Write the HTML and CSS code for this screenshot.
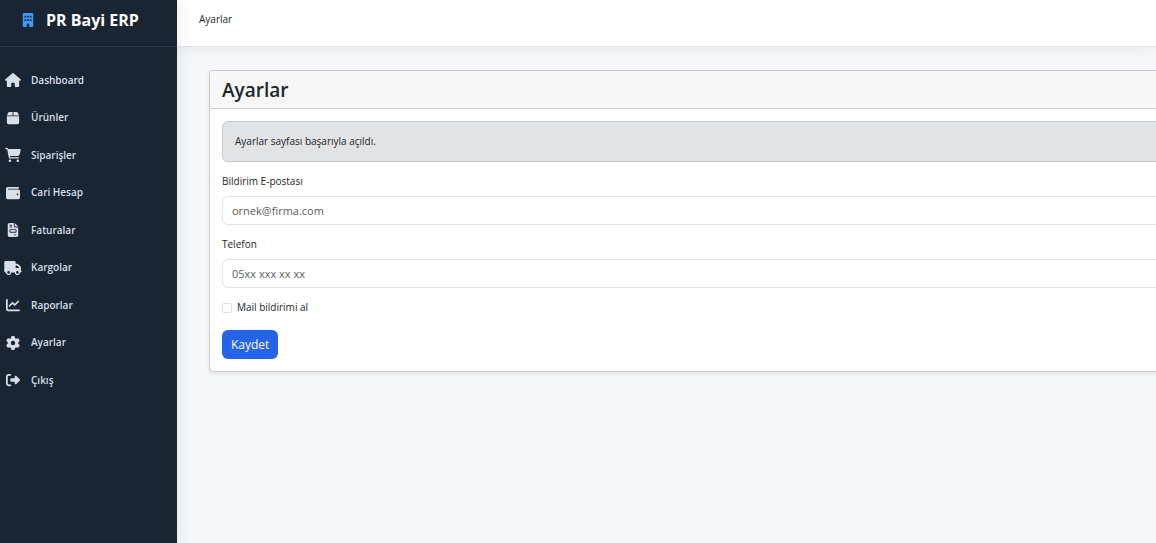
FILE: index.html
```html
<!doctype html>
<html lang="tr">
<head>
	<meta charset="UTF-8">
	<meta name="viewport" content="width=device-width, initial-scale=1">
	<title>Ayarlar</title>

	<link rel="stylesheet" href="styles.css">
</head>
<body>

	<aside class="sidebar">
		<div class="brand">
			<svg class="brand-icon" viewBox="0 0 384 512"><path fill-rule="evenodd" d="M48 0C21 0 0 21 0 48V464c0 27 21 48 48 48h96v-80a48 48 0 0 1 96 0v80h96c27 0 48-21 48-48V48c0-27-21-48-48-48zM64 96h64v64H64zM160 96h64v64h-64zM256 96h64v64h-64zM64 224h64v64H64zM160 224h64v64h-64zM256 224h64v64h-64z"/></svg>
			<span>PR Bayi ERP</span>
		</div>

		<nav>
			<ul class="menu">
				<li><a href="#">
					<svg viewBox="0 0 576 512"><path d="M575.8 255.5c0 18-15 32.1-32 32.1h-32l.7 160.2c0 2.7-.2 5.4-.5 8.1V472c0 22.1-17.9 40-40 40H392c-22.1 0-40-17.9-40-40V384c0-17.7-14.3-32-32-32H256c-17.7 0-32 14.3-32 32v88c0 22.1-17.9 40-40 40H104c-22.1 0-40-17.9-40-40V287.6H32c-18 0-32-14-32-32.1c0-9 3-17 10-24L266.4 8c7-7 15-8 22-8s15 2 21 7L564.8 231.5c8 7 12 15 11 24z"/></svg>
					<span>Dashboard</span>
				</a></li>
				<li><a href="#">
					<svg viewBox="0 0 448 512"><path d="M50.7 58.5L0 160H208V32H93.7C75.5 32 58.9 42.3 50.7 58.5zM240 160H448L397.3 58.5C389.1 42.3 372.5 32 354.3 32H240V160zm208 32H0V416c0 35.3 28.7 64 64 64H384c35.3 0 64-28.7 64-64V192z"/></svg>
					<span>Ürünler</span>
				</a></li>
				<li><a href="#">
					<svg viewBox="0 0 576 512"><path d="M0 24C0 10.7 10.7 0 24 0H69.5c22 0 41.5 12.8 50.6 32h411c26.3 0 45.5 25 38.6 50.4l-41 152.3c-8.5 31.4-37 53.3-69.5 53.3H170.7l5.4 28.5c2.2 11.3 12.1 19.5 23.6 19.5H488c13.3 0 24 10.7 24 24s-10.7 24-24 24H199.7c-34.6 0-64.3-24.6-70.7-58.5L77.4 54.5c-.7-3.8-4-6.5-7.9-6.5H24C10.7 48 0 37.3 0 24zM128 464a48 48 0 1 1 96 0 48 48 0 1 1 -96 0zm336-48a48 48 0 1 1 0 96 48 48 0 1 1 0-96z"/></svg>
					<span>Siparişler</span>
				</a></li>
				<li><a href="#">
					<svg viewBox="0 0 512 512"><path d="M64 32C28.7 32 0 60.7 0 96V416c0 35.3 28.7 64 64 64H448c35.3 0 64-28.7 64-64V192c0-35.3-28.7-64-64-64H80c-8.8 0-16-7.2-16-16s7.2-16 16-16H448c17.7 0 32-14.3 32-32s-14.3-32-32-32H64zM416 272a32 32 0 1 1 0 64 32 32 0 1 1 0-64z"/></svg>
					<span>Cari Hesap</span>
				</a></li>
				<li><a href="#">
					<svg viewBox="0 0 384 512"><path fill-rule="evenodd" d="M64 0C28.7 0 0 28.7 0 64V448c0 35.3 28.7 64 64 64H320c35.3 0 64-28.7 64-64V160H256c-17.7 0-32-14.3-32-32V0H64zM256 0V128H384L256 0zM80 64h64c8.8 0 16 7.2 16 16s-7.2 16-16 16H80c-8.8 0-16-7.2-16-16s7.2-16 16-16zm0 64h64c8.8 0 16 7.2 16 16s-7.2 16-16 16H80c-8.8 0-16-7.2-16-16s7.2-16 16-16zm16 96H288c17.7 0 32 14.3 32 32v64c0 17.7-14.3 32-32 32H96c-17.7 0-32-14.3-32-32V256c0-17.7 14.3-32 32-32zm0 32v64H288V256H96zM240 416h64c8.8 0 16 7.2 16 16s-7.2 16-16 16H240c-8.8 0-16-7.2-16-16s7.2-16 16-16z"/></svg>
					<span>Faturalar</span>
				</a></li>
				<li><a href="#">
					<svg viewBox="0 0 640 512"><path fill-rule="evenodd" d="M48 0C21.5 0 0 21.5 0 48V368c0 26.5 21.5 48 48 48H64c0 53 43 96 96 96s96-43 96-96H384c0 53 43 96 96 96s96-43 96-96h32c17.7 0 32-14.3 32-32s-14.3-32-32-32V237.3c0-17-6.7-33.3-18.7-45.3L512 114.7c-12-12-28.3-18.7-45.3-18.7H416V48c0-26.5-21.5-48-48-48H48zM416 160h50.7L544 237.3V256H416V160zM112 416a48 48 0 1 1 96 0 48 48 0 1 1 -96 0zm368-48a48 48 0 1 1 0 96 48 48 0 1 1 0-96z"/></svg>
					<span>Kargolar</span>
				</a></li>
				<li><a href="#">
					<svg viewBox="0 0 512 512"><path d="M64 64c0-17.7-14.3-32-32-32S0 46.3 0 64V400c0 44.2 35.8 80 80 80H480c17.7 0 32-14.3 32-32s-14.3-32-32-32H80c-8.8 0-16-7.2-16-16V64zm406.6 86.6c12.5-12.5 12.5-32.8 0-45.3s-32.8-12.5-45.3 0L320 210.7l-57.4-57.4c-12.5-12.5-32.8-12.5-45.3 0l-112 112c-12.5 12.5-12.5 32.8 0 45.3s32.8 12.5 45.3 0L240 221.3l57.4 57.4c12.5 12.5 32.8 12.5 45.3 0l128-128z"/></svg>
					<span>Raporlar</span>
				</a></li>
				<li><a href="#">
					<svg viewBox="0 0 512 512"><path d="M495.9 166.6c3.2 8.7 .5 18.4-6.4 24.6l-43.3 39.4c1.1 8.3 1.7 16.8 1.7 25.4s-.6 17.1-1.7 25.4l43.3 39.4c6.9 6.2 9.6 15.9 6.4 24.6c-4.4 11.9-9.7 23.3-15.8 34.3l-4.7 8.1c-6.6 11-14 21.4-22.1 31.2c-5.9 7.2-15.7 9.6-24.5 6.8l-55.7-17.7c-13.4 10.3-28.2 18.9-44 25.4l-12.5 57.1c-2 9.1-9 16.3-18.2 17.8c-13.8 2.3-28 3.5-42.5 3.5s-28.7-1.2-42.5-3.5c-9.2-1.5-16.2-8.7-18.2-17.8l-12.5-57.1c-15.8-6.5-30.6-15.1-44-25.4L83.1 425.9c-8.8 2.8-18.6 .3-24.5-6.8c-8.1-9.8-15.5-20.2-22.1-31.2l-4.7-8.1c-6.1-11-11.4-22.4-15.8-34.3c-3.2-8.7-.5-18.4 6.4-24.6l43.3-39.4C64.6 273.1 64 264.6 64 256s.6-17.1 1.7-25.4L22.4 191.2c-6.9-6.2-9.6-15.9-6.4-24.6c4.4-11.9 9.7-23.3 15.8-34.3l4.7-8.1c6.6-11 14-21.4 22.1-31.2c5.9-7.2 15.7-9.6 24.5-6.8l55.7 17.7c13.4-10.3 28.2-18.9 44-25.4l12.5-57.1c2-9.1 9-16.3 18.2-17.8C227.3 1.2 241.5 0 256 0s28.7 1.2 42.5 3.5c9.2 1.5 16.2 8.7 18.2 17.8l12.5 57.1c15.8 6.5 30.6 15.1 44 25.4l55.7-17.7c8.8-2.8 18.6-.3 24.5 6.8c8.1 9.8 15.5 20.2 22.1 31.2l4.7 8.1c6.1 11 11.4 22.4 15.8 34.3zM256 336a80 80 0 1 0 0-160 80 80 0 1 0 0 160z"/></svg>
					<span>Ayarlar</span>
				</a></li>
				<li><a href="#">
					<svg viewBox="0 0 512 512"><path d="M377.9 105.9L500.7 228.7c7.2 7.2 11.3 17.1 11.3 27.3s-4.1 20.1-11.3 27.3L377.9 406.1c-6.4 6.4-15 9.9-24 9.9c-18.7 0-33.9-15.2-33.9-33.9l0-62.1-128 0c-17.7 0-32-14.3-32-32l0-64c0-17.7 14.3-32 32-32l128 0 0-62.1c0-18.7 15.2-33.9 33.9-33.9c9 0 17.6 3.6 24 9.9zM160 96L96 96c-17.7 0-32 14.3-32 32l0 256c0 17.7 14.3 32 32 32l64 0c17.7 0 32 14.3 32 32s-14.3 32-32 32l-64 0c-53 0-96-43-96-96L0 128C0 75 43 32 96 32l64 0c17.7 0 32 14.3 32 32s-14.3 32-32 32z"/></svg>
					<span>Çıkış</span>
				</a></li>
			</ul>
		</nav>
	</aside>

	<div class="page">
		<header class="topbar">Ayarlar</header>

		<main class="content">
			<section class="card">
				<h1 class="card-header">Ayarlar</h1>

				<form class="card-body">
					<div class="alert">Ayarlar sayfası başarıyla açıldı.</div>

					<div class="field">
						<label for="email">Bildirim E-postası</label>
						<input type="email" id="email" placeholder="ornek@firma.com">
					</div>

					<div class="field">
						<label for="phone">Telefon</label>
						<input type="text" id="phone" placeholder="05xx xxx xx xx">
					</div>

					<div class="check">
						<input type="checkbox" id="mail">
						<label for="mail">Mail bildirimi al</label>
					</div>

					<button type="button" class="btn">Kaydet</button>
				</form>
			</section>
		</main>
	</div>

</body>
</html>
```
FILE: styles.css
```css
* {
	box-sizing: border-box;
}

body,ul,h1 {
	margin: 0px;
	padding: 0px;
	list-style: none;
}

body {
	display: flex;
	min-height: 100vh;
	overflow-x: hidden;
	background: #f5f7fb;
	color: #212529;
	font-family: "Segoe UI", "Open Sans", "Noto Sans", sans-serif;
	font-size: 10px;
	line-height: 1.5;
}

input,button {
	font-family: inherit;
}

/* sidebar */
.sidebar {
	flex: 0 0 177px;
	background: #1a2533;
	box-shadow: 2px 0 16px rgba(0,0,0,.08);
	z-index: 1;
}

.brand {
	display: flex;
	align-items: center;
	height: 47px;
	padding: 0 22px 7px;
	gap: 12px;
	border-bottom: 1px solid #2b3645;
	color: #fff;
	font-size: 16px;
	font-weight: 700;
	white-space: nowrap;
}

.brand-icon {
	width: 12px;
	height: 14px;
	fill: #3b9cff;
}

.menu {
	padding: 15px 3px;
	font-size: 11px;
}

.menu a {
	display: flex;
	align-items: center;
	gap: 8px;
	padding: 10px 0 11px;
	color: #d8dfe9;
	font-weight: 600;
	text-decoration: none;
}

.menu a::after {
	content: "";
	height: 1.5em;
}

.menu span {
	font-size: 10px;
}

.menu svg {
	width: 20px;
	height: 14px;
	fill: currentColor;
}

.menu a:hover {
	color: #fff;
}

/* main column */
.page {
	flex: 1;
	min-width: 0;
}

.topbar {
	height: 47px;
	padding: 12px 22px;
	background: #fff;
	border-bottom: 1px solid #e5e7eb;
	box-shadow: 0 2px 12px rgba(0,0,0,.06);
}

.content {
	padding: 23px 32px;
}

/* the card runs past the right edge of the window */
.card {
	margin-right: -56px;
	background: #fff;
	border: 1px solid #c9cbcd;
	border-radius: 4px;
	box-shadow: 0 2px 4px rgba(0,0,0,.08);
}

.card-header {
	padding: 5px 12px 3px;
	background: #f7f7f7;
	border-bottom: 1px solid #c9cbcd;
	border-radius: 4px 4px 0 0;
	font-size: 19px;
	font-weight: 600;
	line-height: 29px;
}

.card-body {
	padding: 12px;
}

.alert {
	margin-bottom: 12px;
	padding: 12px;
	background: #e2e3e5;
	border: 1px solid #c4c8cb;
	border-radius: 6px;
}

.field {
	margin-bottom: 12px;
}

.field label {
	display: block;
	margin-bottom: 7px;
}

.field input {
	display: block;
	width: 100%;
	height: 29px;
	padding: 0 9px;
	background: #fff;
	border: 1px solid #dee2e6;
	border-radius: 6px;
	font-size: 11px;
}

.field input::placeholder {
	color: #595c5f;
	opacity: 1;
}

.check {
	display: flex;
	align-items: center;
	gap: 5px;
	margin-bottom: 15px;
}

.check input {
	appearance: none;
	width: 10px;
	height: 10px;
	margin: 0;
	border: 1px solid #dee2e6;
	border-radius: 2px;
}

.check input:checked {
	background: #2563eb;
}

.btn {
	height: 29px;
	padding: 0 9px;
	background: #2563eb;
	color: #fff;
	border: none;
	border-radius: 6px;
	font-size: 12px;
	cursor: pointer;
}

.btn:hover {
	background: #1d4ed8;
}
```
